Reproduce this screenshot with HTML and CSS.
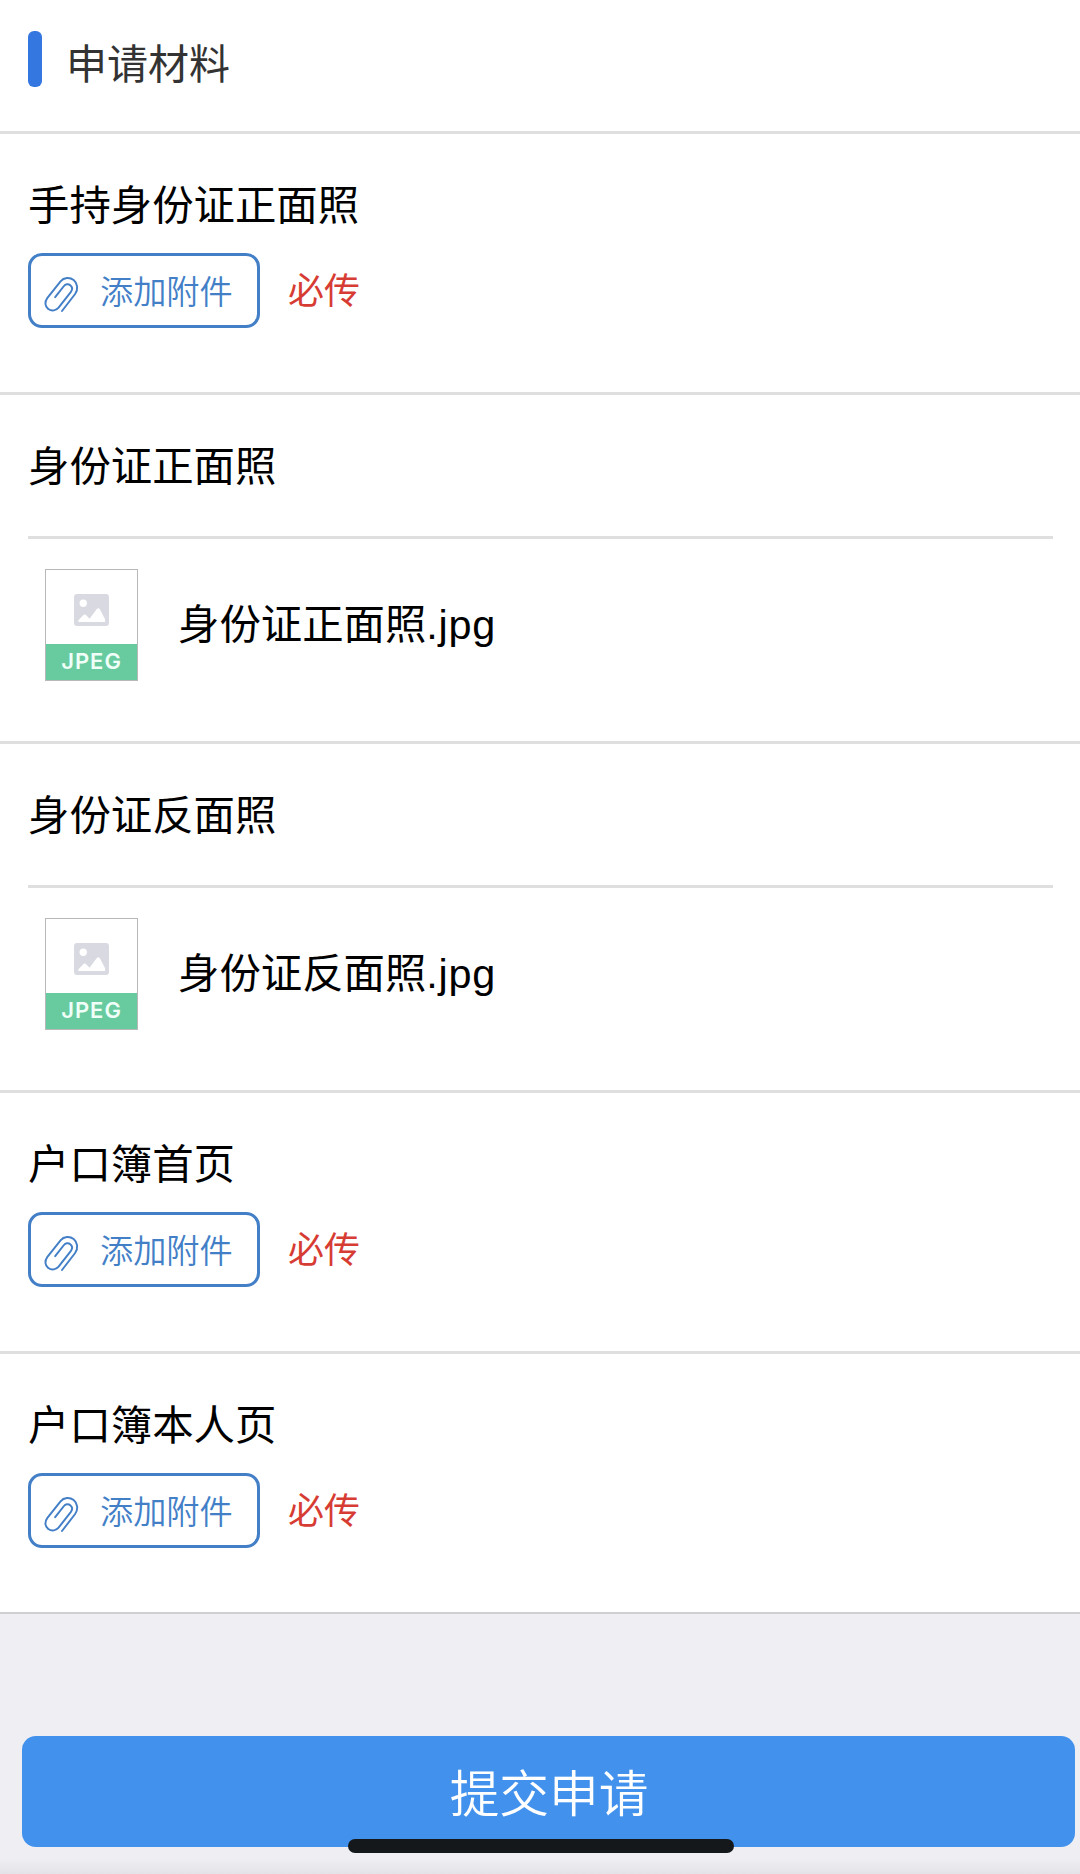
FILE: index.html
```html
<!DOCTYPE html>
<html lang="zh-CN">
	<head>
		<meta charset="UTF-8">
		<title>申请材料</title>
		<link rel="stylesheet" href="styles.css">
	</head>
	<body>
		<!--公用图标-->
		<svg class="sprite">
			<symbol id="clip" viewBox="0 0 36 38">
				<path d="M18.500 36L32 18.500C35.500 13.500 34.500 7.500 30.500 4.200C26.500 1 20.500 1.300 17 5.500L3.500 22.500C0.500 26.500 0.800 31.500 4.500 34C8 36.500 12.500 35.500 15 32.500L27.500 16.500C29.500 13.800 29 11 27 9.400C25 7.800 22 8.200 20.300 10.500L11.500 21.800"/>
			</symbol>
			<symbol id="picture" viewBox="0 0 36 33">
				<rect class="pic-bg" width="36" height="33" rx="3"/>
				<circle class="pic-fg" cx="9.500" cy="9.500" r="3.800"/>
				<path class="pic-fg" d="M4.500 29V27L10 21.500Q11 20.700 12 21.500L16 25.500L23.500 15.500Q25 14 26.500 15.500L32 26V29Z"/>
			</symbol>
		</svg>

		<div class="header">
			<span class="mark"></span>
			<h1>申请材料</h1>
		</div>

		<ul class="list">
			<li class="item">
				<h2>手持身份证正面照</h2>
				<div class="upload">
					<button class="add"><svg class="clip"><use href="#clip"/></svg>添加附件</button>
					<span class="must">必传</span>
				</div>
			</li>
			<li class="item item-file">
				<h2>身份证正面照</h2>
				<div class="file">
					<div class="thumb">
						<svg class="picture"><use href="#picture"/></svg>
						<span class="type">JPEG</span>
					</div>
					<span class="name">身份证正面照<span class="ext">.jpg</span></span>
				</div>
			</li>
			<li class="item item-file">
				<h2>身份证反面照</h2>
				<div class="file">
					<div class="thumb">
						<svg class="picture"><use href="#picture"/></svg>
						<span class="type">JPEG</span>
					</div>
					<span class="name">身份证反面照<span class="ext">.jpg</span></span>
				</div>
			</li>
			<li class="item">
				<h2>户口簿首页</h2>
				<div class="upload">
					<button class="add"><svg class="clip"><use href="#clip"/></svg>添加附件</button>
					<span class="must">必传</span>
				</div>
			</li>
			<li class="item">
				<h2>户口簿本人页</h2>
				<div class="upload">
					<button class="add"><svg class="clip"><use href="#clip"/></svg>添加附件</button>
					<span class="must">必传</span>
				</div>
			</li>
		</ul>

		<div class="footer">
			<button class="submit">提交申请</button>
			<span class="home-bar"></span>
		</div>
	</body>
</html>
```
FILE: styles.css
```css
*{
	margin: 0;
	padding: 0;
	box-sizing: border-box;
}
body{
	display: flex;
	flex-direction: column;
	height: 1874px;
	background-color: #eeeef3;
	color: #000;
	font-family: "Liberation Sans", "Noto Sans CJK SC", sans-serif;
	overflow: hidden;
}
h1, h2{
	font-size: 41.4px;
	font-weight: normal;
	line-height: 60px;
}
button{
	font-family: inherit;
	font-weight: 350;
}
.sprite{
	display: none;
}

/*标题栏*/
.header{
	display: flex;
	height: 134px;
	padding: 31px 28px 0;
	background-color: #fff;
	border-bottom: 3px solid #dfdfdf;
}
.mark{
	width: 14px;
	height: 56px;
	margin-right: 24px;
	border-radius: 6px;
	background-color: #3477e1;
}
.header h1{
	margin-top: 4px;
	color: #333;
	font-size: 41px;
}

/*材料列表*/
.list{
	list-style: none;
}
.item{
	height: 261px;
	padding: 42px 27px 0 28px;
	background-color: #fff;
	border-bottom: 3px solid #dfdfdf;
}
.item-file{
	height: 349px;
}
.item:last-child{
	height: 260px;
	border-bottom: 2px solid #cfcfd1;
}

/*添加附件*/
.upload{
	display: flex;
	align-items: center;
	margin-top: 17px;
}
.add{
	display: flex;
	align-items: center;
	width: 232px;
	height: 75px;
	padding: 0 0 2px 13px;
	border: 3px solid #437fc7;
	border-radius: 14px;
	background-color: #fff;
	color: #437fc7;
	font-size: 33.2px;
}
.clip{
	width: 35px;
	height: 37px;
	margin: 9px 21px 0 0;
	fill: none;
	stroke: #437fc7;
	stroke-width: 2;
	stroke-linecap: round;
}
.must{
	margin-left: 28px;
	padding-bottom: 6px;
	color: #d63c33;
	font-size: 36px;
}

/*已上传的文件*/
.file{
	display: flex;
	align-items: center;
	margin-top: 39px;
	padding: 30px 0 0 17px;
	border-top: 3px solid #dfdfdf;
}
.thumb{
	display: flex;
	flex-direction: column;
	align-items: center;
	width: 93px;
	height: 112px;
	border: 1px solid #b8b8bb;
}
.picture{
	width: 35px;
	height: 32px;
	margin: 24px 0 18px;
}
.pic-bg{
	fill: #d9dae1;
}
.pic-fg{
	fill: #fff;
}
.type{
	width: 91px;
	height: 36px;
	background-color: #68cba0;
	color: #f0fff8;
	font-family: Inter, "Liberation Sans", sans-serif;
	font-size: 22px;
	font-weight: 600;
	letter-spacing: 1px;
	line-height: 35px;
	text-align: center;
}
.name{
	margin-left: 40px;
	font-size: 41.4px;
	line-height: 60px;
}
.ext{
	letter-spacing: 0.7px;
}

/*底部提交*/
.footer{
	position: relative;
	flex: 1;
	padding: 122px 5px 0 22px;
	background: linear-gradient(to top, #e3e3e8, #eeeef3 16px);
}
.submit{
	display: block;
	width: 100%;
	height: 111px;
	padding: 0 0 4px 1px;
	border: none;
	border-radius: 14px;
	background-color: #4292ed;
	color: #fff;
	font-size: 49.7px;
}
/*系统横条压在按钮上面*/
.home-bar{
	position: absolute;
	left: 348px;
	bottom: 21px;
	width: 386px;
	height: 14px;
	border-radius: 7px;
	background-color: #15181b;
}
```
